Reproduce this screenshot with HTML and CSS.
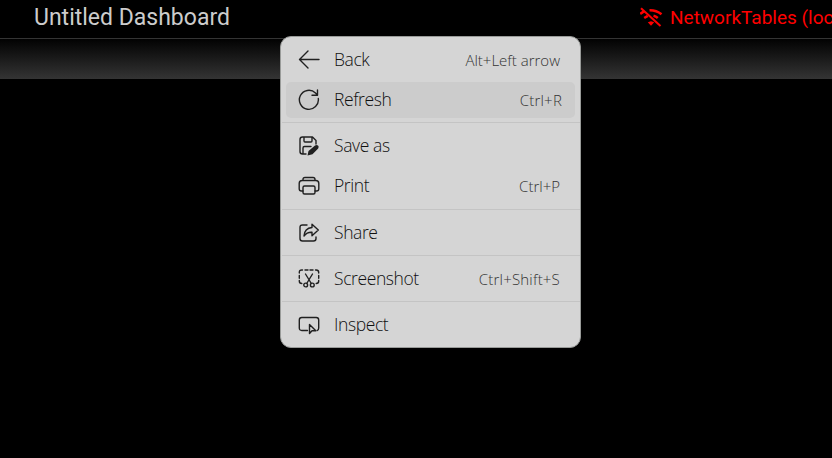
FILE: index.html
```html
<!DOCTYPE html>
<html lang="en">
<head>
<meta charset="utf-8">
<title>Untitled Dashboard</title>
<link rel="stylesheet" href="styles.css">
</head>
<body>
<header class="topbar">
  <h1 class="title">Untitled Dashboard</h1>
  <div class="status">
    <svg class="wifi" viewBox="0 0 24 20" fill="none" stroke="currentColor" stroke-width="2.6"><path d="M2 1.2 21.5 19" stroke-width="2"/><path d="M1.2 6.8 5.3 4.2M10.5 3.3c4.5-.1 8.500 1.200 12 4M5.200 11l3.600-2.200M14.500 8.700c1.600.4 3 1.100 4.300 2.200"/><path d="m8.800 15.200 3.200-1 3.200 1L12 18.700z" fill="currentColor" stroke="none"/></svg>
    <span>NetworkTables (localhost)</span>
  </div>
</header>
<div class="toolbar"></div>
<nav class="menu">
  <div class="item"><svg class="icon" viewBox="0 0 22 22"><path d="M21 10.500H1.500M10 2 1.500 10.500l8.500 8.500"/></svg><span class="label">Back</span><span class="key">Alt+Left arrow</span></div>
  <div class="item active"><svg class="icon" viewBox="0 0 22 22"><path d="M20.300 9.500A9.500 9.500 0 1 1 17.500 4l2 2M19.500 1v5.200h-5.500"/></svg><span class="label">Refresh</span><span class="key short">Ctrl+R</span></div>
  <hr>
  <div class="item"><svg class="icon" viewBox="0 0 22 22"><path d="M8 19H4.500A2.500 2.500 0 0 1 2 16.500v-12A2.500 2.500 0 0 1 4.500 2h10L18 5.500V9M6 2v4q0 1 1 1h6q1 0 1-1V2M5 19v-6q0-1.500 1.500-1.500H13"/><path class="solid" d="m9.500 20.500 1-4.500 6.500-5.500q1.700-1.200 3 0t.2 3L14.500 19.300z"/></svg><span class="label">Save as</span><span class="key"></span></div>
  <div class="item"><svg class="icon" viewBox="0 0 22 22"><path d="M5 16H3.500Q1.200 16 1.200 13.700V8.500Q1.200 5.500 4.200 5.500H17.800q3 0 3 3v5.200q0 2.300-2.300 2.300H17M5 5.500V4.500q0-2 2-2h8q2 0 2 2v1"/><rect x="5" y="11" width="12" height="8" rx="1.500"/></svg><span class="label">Print</span><span class="key">Ctrl+P</span></div>
  <hr>
  <div class="item"><svg class="icon" viewBox="0 0 22 22"><path d="M9 3H4.500Q2 3 2 5.500v11Q2 19 4.500 19h11q2.500 0 2.500-2.500V15"/><path d="M14 2.200 20.300 8 14 13.700v-3.400q-5-.3-8 3.700Q6.500 6.200 14 5.500z"/></svg><span class="label">Share</span><span class="key"></span></div>
  <hr>
  <div class="item"><svg class="icon" viewBox="0 0 22 22"><path d="M1.300 5V4.500Q1.300 2 3.800 2h.7M7 2h3M12 2h3M17.500 2h.700q2.500 0 2.500 2.500V5M1.300 7.500v2.800M20.700 7.500v2.800M1.300 12.500V13q0 2.500 2.500 2.500M20.700 12.500V13q0 2.500-2.500 2.500M7.500 6l5.800 9.500M14.500 6 8.700 15.500"/><circle cx="7.700" cy="17" r="1.900"/><circle cx="14.300" cy="17" r="1.900"/></svg><span class="label">Screenshot</span><span class="key wide">Ctrl+Shift+S</span></div>
  <hr>
  <div class="item"><svg class="icon" viewBox="0 0 22 22"><path d="M9.500 16.500H3.800q-2.500 0-2.500-2.500V6q0-2.500 2.500-2.500h14.400q2.500 0 2.500 2.500v8q0 2.200-1.500 2.500"/><path d="M11.500 10.500v9l2.500-2.700h3.800z"/></svg><span class="label">Inspect</span><span class="key"></span></div>
</nav>
</body>
</html>
```
FILE: styles.css
```css
* { box-sizing: border-box; }
body { margin: 0; height: 458px; background: #000; overflow: hidden; font-family: "Open Sans", "Noto Sans", sans-serif; }
.topbar { height: 39px; border-bottom: 1px solid #343434; display: flex; align-items: center; justify-content: space-between; padding: 0 0 3px 34px; font-family: Roboto, sans-serif; }
.title { margin: 0; font-size: 23px; line-height: 34px; padding-top: 1px; font-weight: 400; color: #ccc; white-space: nowrap; }
.status { flex: none; width: 192px; display: flex; align-items: center; gap: 6px; color: #f00; font-size: 19px; line-height: 34px; font-weight: 450; letter-spacing: 0; white-space: nowrap; overflow: hidden; }
.wifi { flex: none; width: 24px; height: 20px; margin: 0 1px 2px -1px; }
.toolbar { height: 40px; background: linear-gradient(#020202, #343434); }
.menu { position: absolute; left: 280px; top: 36px; width: 301px; height: 312px; display: flex; flex-direction: column; padding: 3px 1px; border: 1px solid #999b99; border-radius: 11px; background: #d5d5d5; color: #101010; }
.item { flex: none; height: 40px; display: flex; align-items: center; padding: 0 19px 0 16px; }
.item.active { height: 36px; margin: 2px 4px; padding: 0 13px 0 12px; border-radius: 5px; background: #ccc; }
.menu hr { flex: none; width: 298px; height: 1px; margin: 2.400px 0 2.930px; border: 0; background: #c4c4c4; }
.icon { flex: none; width: 22px; height: 22px; fill: none; stroke: #202020; stroke-width: 1.400; stroke-linecap: round; stroke-linejoin: round; }
.icon .solid { fill: #202020; stroke: none; }
.label { margin-left: 14px; padding-bottom: 2px; flex: 1; font-size: 17.500px; font-weight: 340; letter-spacing: -.4px; line-height: 24px; white-space: nowrap; }
.key { font-size: 15px; font-weight: 300; line-height: 20px; color: #333; white-space: nowrap; }
.key.wide { letter-spacing: .2px; }
.key.short { letter-spacing: .2px; }
```
